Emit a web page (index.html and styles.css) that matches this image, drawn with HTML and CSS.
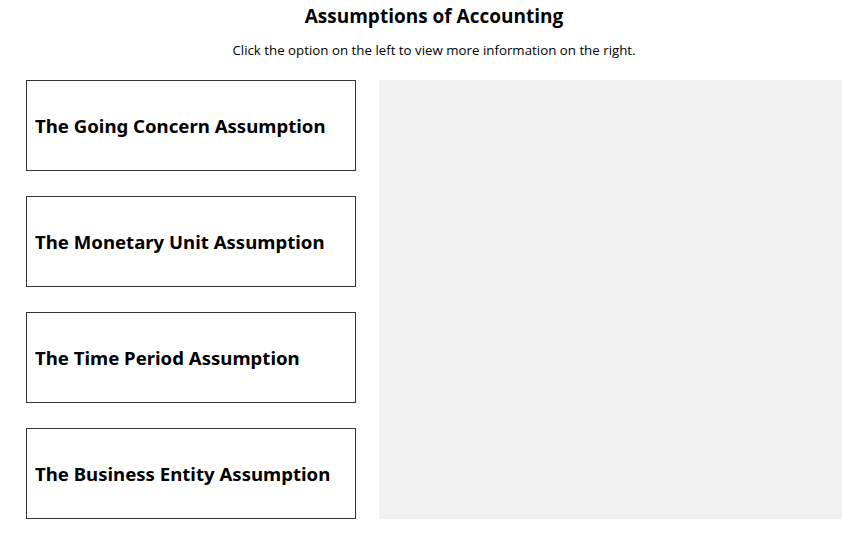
FILE: index.html
```html
<!DOCTYPE html>
<html lang="en">
<head>
    <meta charset="UTF-8">
    <meta name="viewport" content="width=device-width, initial-scale=1.0">
    <title>Assumptions of Accounting</title>
    <link rel="stylesheet" href="styles.css">
</head>
<body>
    <h1 class="title">Assumptions of Accounting</h1>
    <p class="intro">Click the option on the left to view more information on the right.</p>
    <div class="layout">
        <div class="options">
            <div class="option">The Going Concern Assumption</div>
            <div class="option">The Monetary Unit Assumption</div>
            <div class="option">The Time Period Assumption</div>
            <div class="option">The Business Entity Assumption</div>
        </div>
        <div class="info"></div>
    </div>
</body>
</html>
```
FILE: styles.css
```css
body {
    font-family: "Open Sans", Arial, sans-serif;
    margin: 0;
    padding: 0 25px 0 26px;
    color: #000;
    background-color: #fff;
}
.title {
    font-size: 19px;
    font-weight: 700;
    text-align: center;
    margin: 0;
    padding-top: 4px;
    line-height: 24px;
}
.intro {
    font-size: 13.3px;
    text-align: center;
    margin: 13px 0 0;
    line-height: 18px;
}
.layout {
    display: flex;
    gap: 23px;
    margin-top: 21px;
}
.options {
    display: flex;
    flex-direction: column;
    gap: 25px;
    width: 330px;
}
.option {
    height: 89px;
    border: 1px solid #333;
    display: flex;
    align-items: center;
    padding: 0 8px;
    font-family: "Noto Sans", "Open Sans", sans-serif;
    font-size: 18.6px;
    font-weight: 700;
    cursor: pointer;
}
.info {
    flex: 1;
    height: 439px;
    background-color: #f1f1f1;
}
```
